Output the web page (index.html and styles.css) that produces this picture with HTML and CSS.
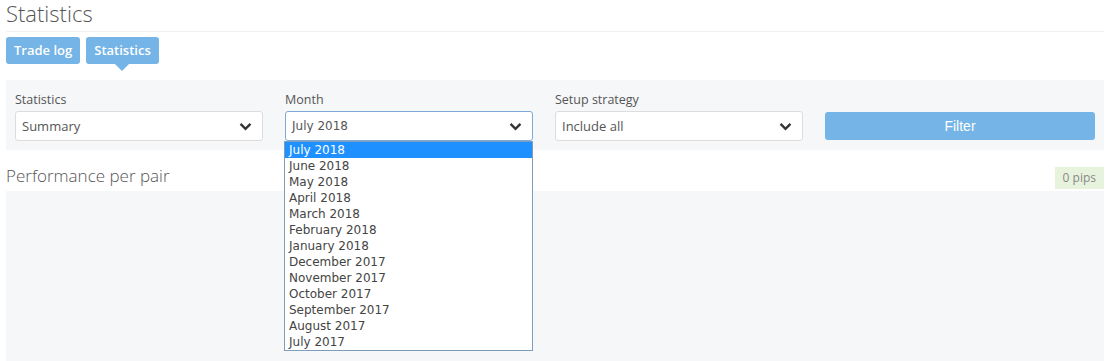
FILE: index.html
```html
<!DOCTYPE html>
<html lang="en">
<head>
    <meta charset="UTF-8">
    <title>Statistics</title>
    <link rel="stylesheet" href="styles.css">
</head>
<body>
    <div class="page">
        <h1 class="pageTitle">Statistics</h1>

        <div class="tabs">
            <a class="tab">Trade log</a>
            <a class="tab active">Statistics</a>
        </div>

        <form class="filterPanel">
            <div class="field">
                <label>Statistics</label>
                <div class="selectBox">
                    <span>Summary</span>
                    <svg class="chevron" viewBox="0 0 14 10" width="13" height="9"><path d="M1.5 2 L7 7.5 L12.5 2" fill="none" stroke="#333" stroke-width="2.6"/></svg>
                </div>
            </div>
            <div class="field">
                <label>Month</label>
                <div class="selectBox focused">
                    <span class="sysFont">July 2018</span>
                    <svg class="chevron" viewBox="0 0 14 10" width="13" height="9"><path d="M1.5 2 L7 7.5 L12.5 2" fill="none" stroke="#333" stroke-width="2.6"/></svg>
                    <ul class="optionList">
                        <li class="selected">July 2018</li>
                        <li>June 2018</li>
                        <li>May 2018</li>
                        <li>April 2018</li>
                        <li>March 2018</li>
                        <li>February 2018</li>
                        <li>January 2018</li>
                        <li>December 2017</li>
                        <li>November 2017</li>
                        <li>October 2017</li>
                        <li>September 2017</li>
                        <li>August 2017</li>
                        <li>July 2017</li>
                    </ul>
                </div>
            </div>
            <div class="field">
                <label>Setup strategy</label>
                <div class="selectBox">
                    <span>Include all</span>
                    <svg class="chevron" viewBox="0 0 14 10" width="13" height="9"><path d="M1.5 2 L7 7.5 L12.5 2" fill="none" stroke="#333" stroke-width="2.6"/></svg>
                </div>
            </div>
            <div class="field">
                <button type="button" class="filterButton">Filter</button>
            </div>
        </form>

        <div class="sectionHeader">
            <h2>Performance per pair</h2>
            <span class="pipsBadge">0 pips</span>
        </div>
        <div class="chartArea"></div>
    </div>
</body>
</html>
```

FILE: styles.css
```css
body {
    font-family: 'Open Sans', sans-serif;
    background-color: #fff;
    margin: 0;
    padding: 0;
    color: #555;
}

.page {
    width: 1098px;
    padding: 0 6px;
}

.pageTitle {
    font-weight: 300;
    font-size: 22px;
    line-height: 26px;
    color: #555;
    margin: 0;
    padding-bottom: 5px;
    border-bottom: 1px solid #f2f2f2;
}

.tabs {
    display: flex;
    gap: 6px;
    margin-top: 5px;
}

.tab {
    position: relative;
    display: block;
    height: 27px;
    line-height: 27px;
    padding: 0 8px;
    background-color: #74b4e6;
    color: #fff;
    font-size: 13px;
    font-weight: 600;
    border-radius: 3px;
}

.tab.active::after {
    content: "";
    position: absolute;
    left: 50%;
    bottom: -7px;
    margin-left: -7px;
    border-left: 7px solid transparent;
    border-right: 7px solid transparent;
    border-top: 7px solid #74b4e6;
}

.filterPanel {
    display: flex;
    gap: 22px;
    margin-top: 16px;
    padding: 10px 9px 9px 9px;
    background-color: #f6f7f9;
}

.field {
    width: 248px;
    display: flex;
    flex-direction: column;
    justify-content: flex-end;
}

.field:last-child {
    width: 270px;
}

.field label {
    font-size: 12.5px;
    line-height: 19px;
    color: #555;
    margin-bottom: 2px;
}

.selectBox {
    position: relative;
    box-sizing: border-box;
    height: 30px;
    display: flex;
    align-items: center;
    justify-content: space-between;
    padding: 0 10px 0 6px;
    background-color: #fff;
    border: 1px solid #ddd;
    border-radius: 3px;
    font-size: 13px;
    color: #555;
}

.selectBox.focused {
    border-color: #7fa9d6;
}

.sysFont {
    font-family: 'DejaVu Sans', Verdana, sans-serif;
    font-size: 12px;
}

.optionList {
    position: absolute;
    top: 29px;
    left: -2px;
    width: 249px;
    box-sizing: border-box;
    margin: 0;
    padding: 0;
    list-style: none;
    background-color: #fff;
    border: 1px solid #7f9db9;
    font-family: 'DejaVu Sans', Verdana, sans-serif;
    font-size: 12px;
    color: #444;
    z-index: 10;
}

.optionList li {
    height: 16px;
    line-height: 16px;
    padding-left: 4px;
}

.optionList li.selected {
    background-color: #1e90ff;
    color: #fff;
}

.filterButton {
    height: 28px;
    margin-bottom: 1px;
    background-color: #74b4e6;
    color: #fff;
    border: none;
    border-radius: 3px;
    font-family: 'Liberation Sans', Arial, sans-serif;
    font-size: 14px;
    cursor: pointer;
}

.sectionHeader {
    display: flex;
    justify-content: space-between;
    align-items: flex-end;
    height: 39px;
    padding-bottom: 2px;
}

.sectionHeader h2 {
    margin: 0;
    font-weight: 300;
    font-size: 17px;
    line-height: 24px;
    color: #555;
    padding-bottom: 1px;
}

.pipsBadge {
    height: 22px;
    line-height: 22px;
    padding: 0 8px;
    background-color: #e8f3de;
    color: #888;
    font-size: 12px;
}

.chartArea {
    height: 170px;
    background-color: #f6f7f9;
}
```
